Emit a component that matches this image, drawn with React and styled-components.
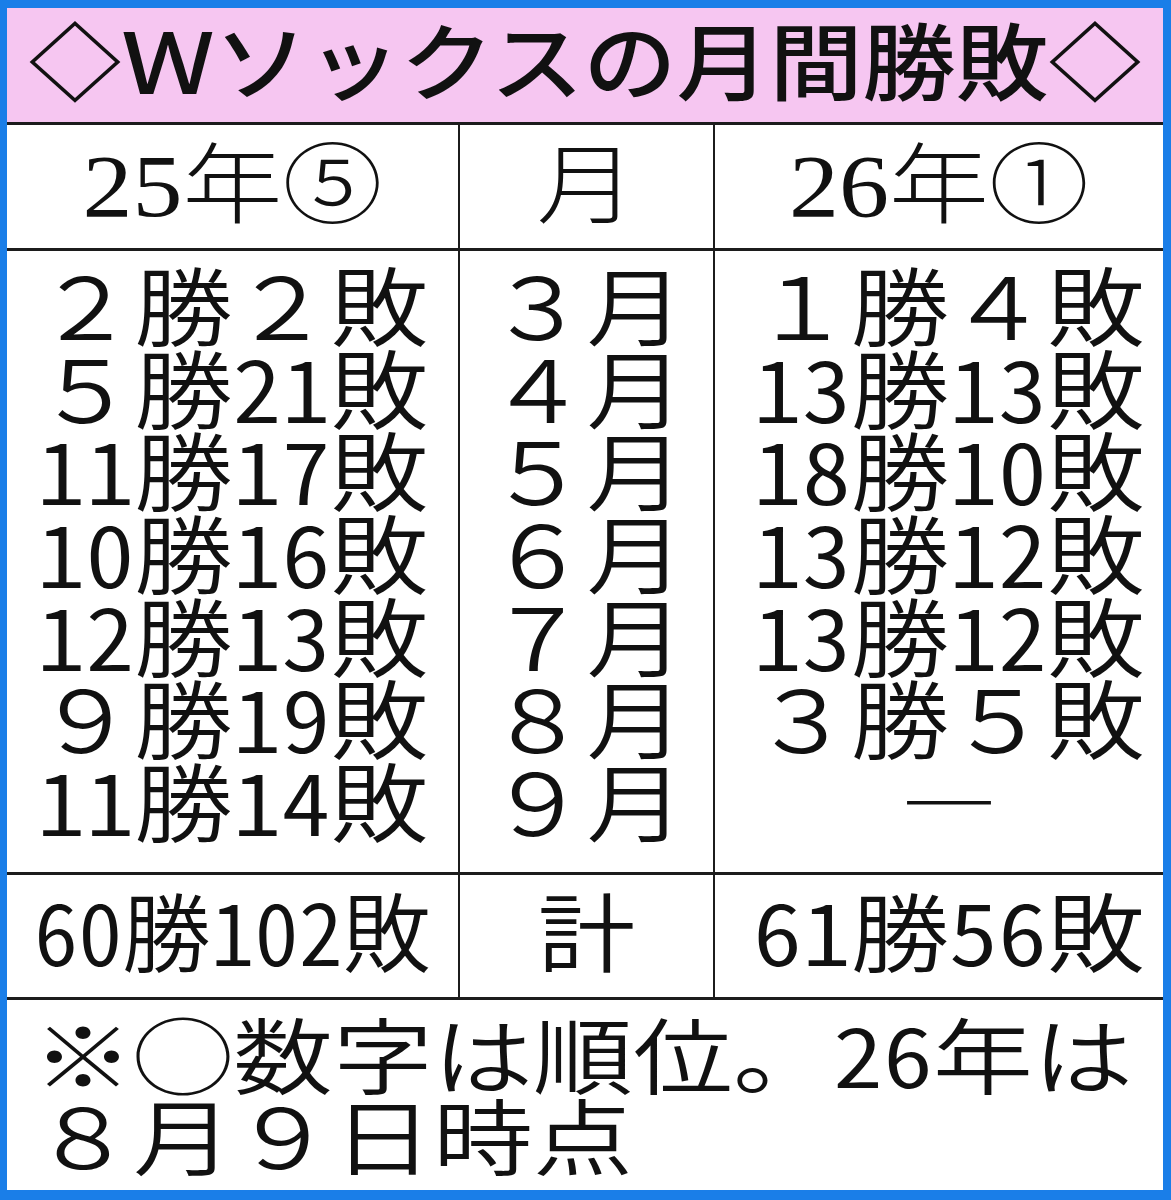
import React from "react";
import styled, { createGlobalStyle } from "styled-components";

const Global = createGlobalStyle`
  html, body { margin: 0; padding: 0; background: #ffffff; }
  #root { width: 1171px; height: 1200px; }
`;

const Frame = styled.div`
  box-sizing: border-box;
  width: 1171px;
  height: 1200px;
  border-style: solid;
  border-color: #1a7ee8;
  border-width: 8px 8px 10px 7px;
  background: #ffffff;
  display: flex;
  flex-direction: column;
  font-family: "Noto Sans CJK JP", "Noto Sans", sans-serif;
  color: #111;
`;

const TitleBar = styled.div`
  height: 114px;
  background: #f6c6f1;
  border-bottom: 3px solid #1c1c1c;
  display: flex;
  align-items: center;
  justify-content: center;
`;

const Flat = styled.span`
  display: inline-block;
  white-space: pre;
  font-size: ${(p) => p.$size}px;
  line-height: ${(p) => p.$lh || p.$size}px;
  font-weight: ${(p) => p.$weight || 300};
  transform: translateY(${(p) => p.$dy || 0}px)
    scale(${(p) => p.$sx || 1}, ${(p) => p.$sy || 1});
  font-family: ${(p) =>
    p.$serif
      ? `"Liberation Serif", "Noto Sans CJK JP", serif`
      : `"Noto Sans CJK JP", "Noto Sans", sans-serif`};
`;

const Digits = styled.span`
  font-feature-settings: "hwid" 1;
`;

const Row = styled.div`
  display: grid;
  grid-template-columns: 451px 255px 1fr;
  height: ${(p) => p.$h}px;
  border-bottom: 3px solid #1c1c1c;
`;

const Cell = styled.div`
  display: flex;
  flex-direction: column;
  align-items: center;
  justify-content: ${(p) => (p.$top ? "flex-start" : "center")};
  padding-top: ${(p) => p.$pt || 0}px;
  padding-left: ${(p) => p.$pl || 0}px;
  border-left: ${(p) => (p.$divider ? "2px solid #1c1c1c" : "none")};
  box-sizing: border-box;
`;

const Line = styled.div`
  height: 82.7px;
  display: flex;
  align-items: center;
  justify-content: center;
`;

const Footer = styled.div`
  flex: 1;
  padding: 14px 0 0 26px;
`;

const FootLine = styled.div`
  height: 83px;
  display: flex;
  align-items: center;
`;

// wrap runs of half-width ASCII digits so they take exactly half an em
function T({ text }) {
  const parts = text.split(/([0-9]+)/);
  return parts.map((p, i) =>
    /^[0-9]+$/.test(p) ? <Digits key={i}>{p}</Digits> : p
  );
}

const left = [
  "２勝２敗",
  "５勝21敗",
  "11勝17敗",
  "10勝16敗",
  "12勝13敗",
  "９勝19敗",
  "11勝14敗",
];
const months = ["３月", "４月", "５月", "６月", "７月", "８月", "９月"];
const right = [
  "１勝４敗",
  "13勝13敗",
  "18勝10敗",
  "13勝12敗",
  "13勝12敗",
  "３勝５敗",
  "―",
];

const BODY = { $size: 98, $sy: 0.88, $lh: 82.7, $dy: -5, $weight: 350 };

export default function App() {
  return (
    <>
      <Global />
      <Frame>
        <TitleBar>
          <Flat $size={93} $lh={93} $sy={0.9} $weight={500} $dy={-8}>
            ◇Ｗソックスの月間勝敗◇
          </Flat>
        </TitleBar>
        <Row $h={123}>
          <Cell>
            <Flat $size={100} $sy={0.88} $serif>
              25年⑤
            </Flat>
          </Cell>
          <Cell $divider>
            <Flat $size={100} $sy={0.88} $serif>
              月
            </Flat>
          </Cell>
          <Cell $divider>
            <Flat $size={100} $sy={0.88} $serif>
              26年①
            </Flat>
          </Cell>
        </Row>
        <Row $h={621}>
          <Cell $top $pt={15}>
            {left.map((t, i) => (
              <Line key={i}>
                <Flat {...BODY}>
                  <T text={t} />
                </Flat>
              </Line>
            ))}
          </Cell>
          <Cell $divider $top $pt={15}>
            {months.map((t, i) => (
              <Line key={i}>
                <Flat {...BODY}>{t}</Flat>
              </Line>
            ))}
          </Cell>
          <Cell $divider $top $pt={15} $pl={20}>
            {right.map((t, i) => (
              <Line key={i}>
                <Flat {...BODY}>
                  <T text={t} />
                </Flat>
              </Line>
            ))}
          </Cell>
        </Row>
        <Row $h={122}>
          <Cell>
            <Flat $size={98} $sx={0.9} $sy={0.88} $dy={-8} $weight={350}>
              <T text="60勝102敗" />
            </Flat>
          </Cell>
          <Cell $divider>
            <Flat $size={98} $sy={0.88} $dy={-8} $weight={350}>
              計
            </Flat>
          </Cell>
          <Cell $divider $pl={20}>
            <Flat $size={98} $sy={0.88} $dy={-8} $weight={350}>
              <T text="61勝56敗" />
            </Flat>
          </Cell>
        </Row>
        <Footer>
          <FootLine>
            <Flat $size={100} $sy={0.83} $dy={-4} $weight={350}>
              <T text="※◯数字は順位。26年は" />
            </Flat>
          </FootLine>
          <FootLine>
            <Flat $size={100} $sy={0.83} $dy={-6} $weight={350}>
              ８月９日時点
            </Flat>
          </FootLine>
        </Footer>
      </Frame>
    </>
  );
}
